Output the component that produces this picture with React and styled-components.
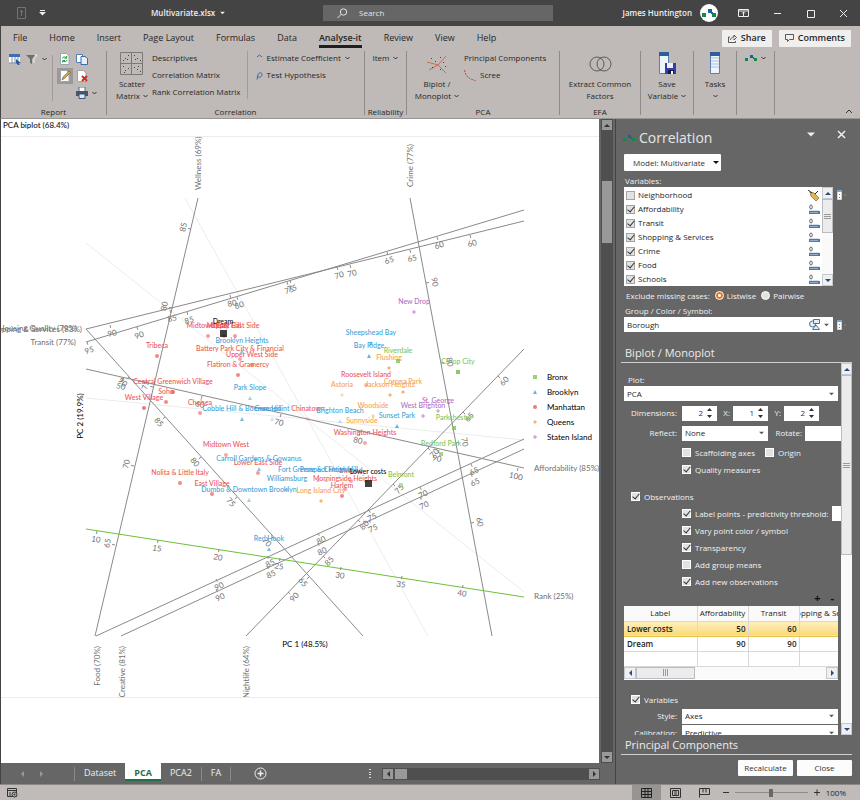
import React from 'react';
import styled, { createGlobalStyle, css } from 'styled-components';

const GlobalStyle = createGlobalStyle`
  * {
    box-sizing: border-box;
  }
  body {
    margin: 0;
    background: #666;
    color: #262626;
    font: 8px/12px 'Open Sans', 'Noto Sans', sans-serif;
  }
  button, input, select {
    margin: 0;
    padding: 0;
    border: 0;
    border-radius: 0;
    background: none;
    color: inherit;
    font: inherit;
  }
  h1, h2, h3, p {
    margin: 0;
    font-weight: 400;
  }
  svg {
    display: block;
    flex-shrink: 0;
  }
`;

const Shell = styled.div`
  display: flex;
  flex-direction: column;
  height: 100vh;
  overflow: hidden;
`;

/* ---------- title bar ---------- */

const TitleBar = styled.header`
  display: flex;
  align-items: center;
  flex-shrink: 0;
  height: 26px;
  padding: 0 12px 0 17px;
  background: #444;
  color: #f0f0f0;

  .quick {
    display: flex;
    align-items: center;
    gap: 13px;
    width: 134px;
  }
  .file {
    display: flex;
    align-items: center;
    gap: 5px;
    width: 172px;
    font-weight: 600;
  }
  .right {
    display: flex;
    align-items: center;
    margin-left: auto;
  }
  .user {
    margin-right: 8px;
    font-weight: 600;
  }
`;

const SearchBox = styled.label`
  display: flex;
  align-items: center;
  gap: 11px;
  flex: 0 1 230px;
  height: 16px;
  padding-left: 14px;
  background: #666;

  input {
    width: 100%;
    outline: none;
  }
  input::placeholder {
    color: #e4e4e4;
    opacity: 1;
  }
`;

const WindowButtons = styled.div`
  display: flex;
  align-items: center;
  gap: 24px;
  margin-left: 20px;

  button {
    display: flex;
  }
`;

/* ---------- ribbon ---------- */

const TabRow = styled.nav`
  display: flex;
  align-items: center;
  flex-shrink: 0;
  gap: 22px;
  height: 24px;
  padding: 0 9px 0 12px;
  border-left: 1px solid #444;
  background: #bfbab7;
  font-size: 9px;
`;

const RibbonTab = styled.a`
  padding: 4px 0 1px;
  border-bottom: 3px solid ${({ $active }) => ($active ? '#1f1f1f' : 'transparent')};
  color: #262626;
  font-weight: ${({ $active }) => ($active ? 600 : 400)};
  text-decoration: none;
  white-space: nowrap;
`;

const TabActions = styled.div`
  display: flex;
  gap: 7px;
  margin-left: auto;

  button {
    display: flex;
    align-items: center;
    gap: 4px;
    height: 17px;
    padding: 0 6px;
    border-radius: 1px;
    background: #f0efee;
    font-weight: 600;
  }
`;

const Ribbon = styled.div`
  display: flex;
  flex-shrink: 0;
  height: 69px;
  border-left: 1px solid #444;
  border-bottom: 1px solid #989694;
  background: #bfbab7;
`;

const Group = styled.section`
  display: flex;
  flex-direction: column;
  flex-shrink: 0;
  width: ${({ $width }) => $width}px;
  margin: 1px 0 3px;
  border-right: 1px solid #8f8b88;

  .body {
    display: flex;
    justify-content: ${({ $center }) => ($center ? 'center' : 'flex-start')};
    flex: 1;
    min-height: 0;
    padding-left: ${({ $pad }) => $pad || 0}px;
  }
  .caption {
    height: 10px;
    line-height: 14px;
    text-align: center;
    white-space: nowrap;
  }
`;

const Stack = styled.div`
  display: flex;
  flex-direction: column;
  gap: 5px;
  padding-top: 1px;
  ${({ $divided }) =>
    $divided &&
    css`
      margin: 0 8px 6px 0;
      padding-right: 6px;
      border-right: 1px solid #a19c99;
    `}
`;

const ToolButton = styled.button`
  display: flex;
  align-items: center;
  gap: 4px;
  height: 12px;
  text-align: left;
  white-space: nowrap;
`;

const BigButton = styled.button`
  display: flex;
  flex-direction: column;
  align-items: center;
  width: ${({ $width }) => $width}px;
  line-height: 12px;
  text-align: center;

  .icon {
    display: flex;
    align-items: center;
    height: 25px;
    margin-bottom: 2px;
  }
  .line {
    display: flex;
    align-items: center;
    justify-content: center;
    gap: 3px;
    min-height: 12px;
    white-space: nowrap;
  }
`;

const ReportTools = styled.div`
  display: grid;
  grid-template-columns: 17px 17px 8px 9px 16px 17px 8px;
  grid-template-rows: 16px 17px 17px;
  align-content: start;
  align-items: center;
  justify-items: center;

  button {
    display: flex;
    align-items: center;
    justify-content: center;
    width: 16px;
    height: 16px;
  }
  .divider {
    grid-row: 1 / 4;
    grid-column: 4;
    align-self: stretch;
    width: 1px;
    margin-top: 4px;
    background: #a19c99;
  }
  .pressed {
    background: #9c9895;
  }
  .edit {
    grid-column: 5;
  }
  .print {
    grid-column: 6;
  }
`;

const Collapse = styled.button`
  align-self: flex-end;
  margin: 0 7px 4px auto;
`;

/* ---------- workbook ---------- */

const Workspace = styled.main`
  display: flex;
  flex: 1;
  min-height: 0;
  border-left: 1px solid #444;
  background: #666;
`;

const Workbook = styled.div`
  display: flex;
  flex-direction: column;
  flex: 1;
  min-width: 0;
  border-right: 1px solid #444;
`;

const SheetArea = styled.div`
  display: flex;
  flex: 1;
  min-height: 0;
`;

const Sheet = styled.div`
  flex: 1;
  min-width: 0;
  overflow: hidden;
  background: #fff;

  h1 {
    height: 18px;
    padding-left: 2px;
    border-bottom: 1px solid #ececec;
    color: #111;
    font: 500 8px/12px Lato, sans-serif;
  }
`;

const Chart = styled.svg`
  width: 100%;
  height: 561px;
  border-bottom: 1px solid #ececec;
  font-family: Lato, sans-serif;
  font-size: 8px;

  .axis {
    fill: #6f6f6f;
    font-size: 8px;
  }
  .point {
    font-size: 7px;
    font-weight: 500;
    text-anchor: middle;
  }
  .middle {
    text-anchor: middle;
  }
  .end {
    text-anchor: end;
  }
`;

const VScroll = styled.div`
  display: flex;
  flex-direction: column;
  align-items: center;
  width: 12px;
  margin: 0 2px;
  background: #4f4f4f;

  button {
    display: flex;
    align-items: center;
    justify-content: center;
    width: 10px;
    height: 10px;
    margin: 1px 0;
    background: #999;
  }
  .thumb {
    width: 10px;
    height: 62px;
    margin: 50px 0 auto;
    background: #999;
  }
`;

const SheetTabs = styled.div`
  display: flex;
  align-items: center;
  flex-shrink: 0;
  height: 21px;
  padding: 0 15px 0 19px;
  color: #f0f0f0;

  .arrows {
    display: flex;
    gap: 14px;
    width: 54px;
  }
  .add {
    display: flex;
    margin-left: 23px;
  }
  .grip {
    margin: 0 11px 0 auto;
  }
`;

const SheetTab = styled.a`
  align-self: flex-start;
  height: ${({ $active }) => ($active ? 18 : 17)}px;
  padding: 4px 9px 0;
  border-bottom: 2px solid ${({ $active }) => ($active ? '#1e7145' : 'transparent')};
  background: ${({ $active }) => ($active ? '#fff' : 'none')};
  color: ${({ $active }) => ($active ? '#1e7145' : '#f0f0f0')};
  font-size: 9px;
  font-weight: ${({ $active }) => ($active ? 700 : 400)};
  line-height: 12px;
  text-decoration: none;
`;

const TabRule = styled.span`
  width: 1px;
  height: 14px;
  background: #8a8a8a;
`;

const HScroll = styled.div`
  display: flex;
  align-items: center;
  width: 218px;
  height: 12px;
  background: #4f4f4f;

  button {
    display: flex;
    align-items: center;
    justify-content: center;
    width: 10px;
    height: 10px;
    margin: 0 1px;
    background: #999;
  }
  .thumb {
    width: 12px;
    height: 10px;
    margin: 0 auto 0 1px;
    background: #999;
  }
`;

/* ---------- task panel ---------- */

const Panel = styled.aside`
  display: flex;
  flex-direction: column;
  flex: 0 0 244px;
  width: 244px;
  min-width: 0;
  padding: 0 8px 8px 5px;
  color: #f2f2f2;
`;

const PanelHead = styled.div`
  display: flex;
  align-items: center;
  gap: 4px;
  height: 35px;
  padding: 2px 6px 0 2px;

  h2 {
    color: #e6e6e6;
    font-size: 14px;
    line-height: 20px;
  }
  .menu {
    margin: -6px 18px 0 auto;
  }
  .close {
    margin-top: -6px;
  }
`;

const ModelButton = styled.button`
  display: flex;
  align-items: center;
  justify-content: space-between;
  width: 97px;
  height: 17px;
  margin: 0 0 4px 3px;
  padding: 0 2px 0 9px;
  border-radius: 1px;
  background: #fcfcfc;
  color: #333;
`;

const FieldLabel = styled.label`
  display: block;
  padding-left: 4px;
`;

const WithPicker = styled.div`
  display: flex;
  gap: 4px;
  padding-left: 3px;

  .picker {
    align-self: flex-start;
    margin-top: 3px;
  }
`;

const VariableList = styled.div`
  display: flex;
  width: 209px;
  height: 99px;
  background: #fff;
  color: #1c1c1c;

  ul {
    flex: 1;
    margin: 0;
    padding: 1px 2px;
    list-style: none;
  }
  li {
    display: flex;
    align-items: center;
    justify-content: space-between;
    height: 14px;
  }
`;

const Check = styled.label`
  display: flex;
  align-items: center;
  gap: ${({ $tight }) => ($tight ? 3 : 4)}px;
  white-space: nowrap;

  input {
    display: flex;
    align-items: center;
    justify-content: center;
    appearance: none;
    flex-shrink: 0;
    width: 9px;
    height: 9px;
    border: 1px solid ${({ $dark }) => ($dark ? '#a4a4a4' : '#fff')};
    background: #e2e2e2;
  }
  input[type='radio'] {
    border-radius: 50%;
  }
  input[type='radio']:checked {
    border-color: #fff;
    background: radial-gradient(circle, #fff 1px, #e0761c 2px);
  }
  input[type='checkbox']:checked::after {
    content: '';
    width: 3px;
    height: 6px;
    margin-bottom: 2px;
    border: solid #333;
    border-width: 0 1px 1px 0;
    transform: rotate(40deg);
  }
`;

const LightScroll = styled.div`
  display: flex;
  flex-direction: ${({ $horizontal }) => ($horizontal ? 'row' : 'column')};
  align-items: stretch;
  flex-shrink: 0;
  height: ${({ $horizontal }) => ($horizontal ? '12px' : 'auto')};
  background: #fafafa;

  button {
    display: flex;
    align-items: center;
    justify-content: center;
    flex: 0 0 12px;
    min-width: 11px;
    border: 1px solid #c5c9cf;
    background: #eef0f2;
  }
  .thumb {
    display: flex;
    align-items: center;
    justify-content: center;
    flex: 0 0 ${({ $thumb }) => $thumb}px;
    border: 1px solid #b9bdc2;
    background: #ececee;
  }
  .track {
    flex: 1;
  }
`;

const CasesRow = styled.div`
  display: flex;
  align-items: center;
  gap: 5px;
  height: 19px;
  padding-left: 5px;
`;

const SelectWrap = styled.span`
  display: flex;
  align-items: center;
  flex-shrink: 0;
  width: ${({ $width }) => $width}px;
  height: 15px;
  padding-right: 4px;
  background: #fff;
  color: #262626;

  select {
    flex: 1;
    height: 15px;
    padding-left: 3px;
    appearance: none;
    outline: none;
  }
`;

const SectionTitle = styled.h3`
  flex-shrink: 0;
  height: ${({ $height }) => $height}px;
  padding: ${({ $top }) => $top}px 0 0 4px;
  border-bottom: 1px solid #d0d0d0;
  color: #ececec;
  font-size: 11px;
  line-height: 15px;
`;

const Options = styled.div`
  display: flex;
  flex: 1;
  min-height: 0;
  overflow: hidden;

  .content {
    flex: 1;
    min-width: 0;
    overflow: hidden;
    padding: 11px 0 0 3px;
  }
`;

const FormRow = styled.div`
  display: flex;
  align-items: center;
  height: ${({ $height }) => $height}px;

  .name {
    flex-shrink: 0;
    width: 58px;
    padding-right: 5px;
    text-align: right;
  }
  .side {
    flex-shrink: 0;
    width: ${({ $side }) => $side || 16}px;
    padding-right: 3px;
    text-align: right;
  }
`;

const Spinner = styled.span`
  display: flex;
  align-items: center;
  flex-shrink: 0;
  width: ${({ $width }) => $width || 35}px;
  height: 15px;
  padding-right: 5px;
  background: #fff;
  color: #333;

  input {
    flex: 1;
    width: 0;
    padding-right: 4px;
    outline: none;
    text-align: right;
  }
`;

const CheckRow = styled.div`
  display: flex;
  align-items: center;
  gap: ${({ $gap }) => $gap || 10}px;
  height: 17px;
  padding-left: ${({ $indent }) => $indent}px;
`;

const TableTools = styled.div`
  display: flex;
  justify-content: flex-end;
  gap: 10px;
  height: 16px;
  padding-right: 7px;
  color: #0d0d0d;
  font-size: 11px;
  font-weight: 700;
`;

const DataFrame = styled.div`
  width: 214px;
  height: 74px;
  overflow: hidden;
  background: #fff;
  color: #1c1c1c;

  table {
    width: 226px;
    border-collapse: collapse;
    table-layout: fixed;
  }
  th, td {
    height: 15px;
    padding: 0 2px;
    border: solid #d8d8d8;
    border-width: 0 1px 1px 0;
    font-weight: 600;
    line-height: 12px;
    text-align: right;
  }
  th {
    padding: 0;
    background: #fafafa;
    font-weight: 400;
  }
  th span {
    display: flex;
    justify-content: center;
    overflow: hidden;
    white-space: nowrap;
  }
  td:first-child {
    padding-left: 3px;
    text-align: left;
  }
  .selected td {
    border-bottom-color: #e8c34a;
    background: linear-gradient(#fff0bb, #fbd978);
  }
`;

const PanelFooter = styled.div`
  display: flex;
  flex-shrink: 0;
  justify-content: flex-end;
  gap: 4px;
  padding-top: 5px;

  button {
    width: 55px;
    height: 16px;
    border-radius: 1px;
    background: #fcfcfc;
    color: #333;
  }
`;

/* ---------- status bar ---------- */

const StatusBar = styled.footer`
  display: flex;
  align-items: center;
  flex-shrink: 0;
  height: 16px;
  padding: 0 14px 0 7px;
  border-top: 1px solid #8c8885;
  background: #c0bbb8;

  .views {
    display: flex;
    margin: 0 4px 0 auto;
  }
  .zoom {
    display: flex;
    align-items: center;
    gap: 6px;
  }
`;

const ViewButton = styled.button`
  display: flex;
  align-items: center;
  justify-content: center;
  width: 29px;
  height: 15px;
  background: ${({ $active }) => ($active ? '#989492' : 'none')};
`;

const ZoomRange = styled.input`
  appearance: none;
  width: 73px;
  height: 9px;
  background: linear-gradient(#8e8a87, #8e8a87) center / 100% 1px no-repeat;

  &::-webkit-slider-thumb {
    appearance: none;
    width: 4px;
    height: 8px;
    background: #6a6765;
  }
`;

/* ---------- small drawings ---------- */

const Chevron = ({ color = '#333', up }) => (
  <svg width="5" height="4" viewBox="0 0 5 4">
    <path d={up ? 'M.5 3L2.5 1l2 2' : 'M.5 1l2 2 2-2'} fill="none" stroke={color} />
  </svg>
);

const TRIANGLES = {
  up: 'M0 4h6L3 1z',
  down: 'M0 1h6L3 4z',
  left: 'M4 0v6L1 3z',
  right: 'M1 0v6l3-3z',
};

const Triangle = ({ dir = 'down', color = '#333', size = 6 }) => {
  const tall = dir === 'left' || dir === 'right';
  return (
    <svg
      width={tall ? size - 1 : size}
      height={tall ? size : size - 1}
      viewBox={tall ? '0 0 5 6' : '0 0 6 5'}
    >
      <path d={TRIANGLES[dir]} fill={color} />
    </svg>
  );
};

const UpDown = () => (
  <svg width="5" height="10" viewBox="0 0 5 10">
    <path d="M0 3h5L2.500 0zM0 7h5L2.500 10z" fill="#333" />
  </svg>
);

const Logo = ({ size = 12 }) => (
  <svg width={size} height={size / 2} viewBox="0 0 12 6">
    <path d="M0 3h3v3H0zM9 3h3v3H9z" fill="#118a43" />
    <path d="M5 0h3v3H5zM8 2h1v2H8z" fill="#1464a5" />
  </svg>
);

const Avatar = () => (
  <svg width="18" height="18" viewBox="0 0 18 18">
    <circle cx="9" cy="9" r="9" fill="#fff" />
    <path d="M2 9h4v4H2zM12 9h4v4h-4z" fill="#118a43" />
    <path d="M8 5h4v4H8zM11 8h2v2h-2z" fill="#1464a5" />
  </svg>
);

const SearchIcon = () => (
  <svg width="11" height="11" viewBox="0 0 11 11">
    <g fill="none" stroke="#e4e4e4">
      <circle cx="6.500" cy="4" r="3.200" />
      <path d="M4.200 6.300L.5 10" />
    </g>
  </svg>
);

const PinIcon = () => (
  <svg width="9" height="12" viewBox="0 0 9 12">
    <path d="M.5.5h8v11h-8zM4.500 9V3.500M3 5l1.500-1.500L6 5" fill="none" stroke="#737373" />
  </svg>
);

const TableIcon = () => (
  <svg width="12" height="11" viewBox="0 0 12 11">
    <path d="M0 1h11v8H0z" fill="#fff" />
    <path d="M0 0h11v3H0z" fill="#3c6fae" />
    <path d="M3 3v6M6 3v6M9 3v6M0 9h7" fill="none" stroke="#7e8fa6" />
    <path d="M7 5l5 4-2 .3.500 1.700H9L7 9z" fill="#2b5ca3" />
  </svg>
);

const FunnelIcon = () => (
  <svg width="11" height="11" viewBox="0 0 11 11">
    <path d="M0 1h9L6 5v5L4 9V5z" fill="#6d6f73" />
    <path d="M9 1h2L8 5v4" fill="none" stroke="#eee" />
  </svg>
);

const PageIcon = ({ kind }) => (
  <svg width="12" height="12" viewBox="0 0 12 12">
    {kind === 'copy' && (
      <>
        <path d="M.5 1.500h6v8h-6z" fill="#fff" stroke="#4f7fbd" />
        <path d="M5 3.500h4l2.500 2v6H5z" fill="#e6effa" stroke="#3a6bac" />
      </>
    )}
    {kind !== 'copy' && <path d="M1.500.5h6l2.500 2.500v8.500H1.500z" fill="#fff" stroke="#9ba6b4" />}
    {kind === 'refresh' && (
      <path d="M3.500 5.500a2.200 2.200 0 0 1 4-.5M8 7a2.200 2.200 0 0 1-4 .7M7.700 3v2.200H5.500M3.700 9.500V7.500H6" fill="none" stroke="#1f9a3a" />
    )}
    {kind === 'edit' && <path d="M3 10l1-3 6-6 1.500 1.500-6 6z" fill="#d8a53f" stroke="#6e5a2c" strokeWidth=".6" />}
    {kind === 'delete' && <path d="M6 6l5 5M11 6l-5 5" stroke="#d5281e" strokeWidth="2" />}
  </svg>
);

const PrinterIcon = () => (
  <svg width="12" height="12" viewBox="0 0 12 12">
    <path d="M3 0h6v5H3z" fill="#fff" stroke="#4472ac" />
    <path d="M0 4h12v5H0z" fill="#4e5560" />
    <path d="M3 7h6v4.500H3z" fill="#dfe8f3" stroke="#35557f" />
  </svg>
);

const ScatterIcon = () => (
  <svg width="24" height="24" viewBox="0 0 24 24">
    <path d="M.5.5h22v22H.5zM11.500.5v22M.5 11.500h22" fill="none" stroke="#7d7977" />
    <path
      d="M3 8h1v1H3zM5 6h1v1H5zM8 3h1v1H8zM7 7h1v1H7zM14 3h1v1h-1zM17 6h1v1h-1zM20 8h1v1h-1zM15 7h1v1h-1zM3 14h1v1H3zM5 18h1v1H5zM8 16h1v1H8zM4 20h1v1H4zM14 15h1v1h-1zM17 17h1v1h-1zM20 19h1v1h-1zM18 14h1v1h-1z"
      fill="#444"
    />
  </svg>
);

const BiplotIcon = () => (
  <svg width="22" height="20" viewBox="0 0 22 20">
    <path d="M1 8l11 3 8-9M12 11l8 8M12 11L3 16" fill="none" stroke="#cf6a57" />
    <path d="M14 3h1v1h-1zM17 8h1v1h-1zM19 12h1v1h-1zM9 7h1v1H9zM6 13h1v1H6zM14 15h1v1h-1zM5 4h1v1H5z" fill="#444" />
  </svg>
);

const ScreeIcon = () => (
  <svg width="12" height="11" viewBox="0 0 12 11">
    <path d="M.5 0c1 6 4 9 11 10.500" fill="none" stroke="#b4503f" strokeDasharray="2 1" />
  </svg>
);

const CirclesIcon = () => (
  <svg width="23" height="16" viewBox="0 0 23 16">
    <g fill="none" stroke="#444" strokeWidth=".8">
      <circle cx="8" cy="8" r="7" />
      <circle cx="15" cy="8" r="7" />
    </g>
  </svg>
);

const ColumnIcon = ({ save }) => (
  <svg width="18" height="23" viewBox="0 0 18 23">
    <g transform={save ? 'translate(-2 0)' : 'translate(1 0)'}>
      <path d="M3.500.5h9v21h-9z" fill="#eef4fb" stroke="#5d7fae" />
      <path d="M3 0h10v4H3z" fill="#2f5c9c" />
      {!save && <path d="M4 6h8M4 9h8M4 12h8M4 15h8" stroke="#a9bfdb" />}
    </g>
    {save && (
      <>
        <path d="M7 11h11v11H7z" fill="#3540a4" />
        <path d="M9 11h6v5H9z" fill="#eef" />
        <path d="M10 18h6v4h-6z" fill="#111a52" />
        <path d="M13 19h2v3h-2z" fill="#fff" />
      </>
    )}
  </svg>
);

const PickerIcon = () => (
  <svg width="9" height="10" viewBox="0 0 9 10">
    <path d="M.5.5h4v9h-4z" fill="#fff" stroke="#c7d6e8" />
    <path d="M0 0h5v2H0z" fill="#7ea3d0" />
    <path d="M2 4h1v1H2zM2 7h1v1H2z" fill="#5882b5" />
    <path d="M7 5h2" stroke="#8a8a8a" />
  </svg>
);

const TagIcon = () => (
  <svg width="12" height="11" viewBox="0 0 12 11">
    <path d="M2 2l4 1 5 5-3 3-5-5z" fill="#e3b64d" stroke="#7b6531" strokeWidth=".7" />
    <path d="M0 0l4 3M7 4l3-3" stroke="#222" fill="none" />
  </svg>
);

const ScaleIcon = () => (
  <svg width="12" height="11" viewBox="0 0 12 11">
    <ellipse cx="3" cy="3" rx="1.300" ry="2" fill="none" stroke="#444" strokeWidth=".8" />
    <path d="M1 7h11v3H1z" fill="#54789f" />
    <path d="M1 6.500h10M3 8v1M5 8v1M7 8v1M9 8v1" stroke="#d3e0ee" fill="none" />
  </svg>
);

const SymbolsIcon = () => (
  <svg width="11" height="11" viewBox="0 0 11 11">
    <g fill="#e4eef8" stroke="#4a7096">
      <circle cx="3.500" cy="5" r="3" />
      <path d="M4.500.5h6v4h-6z" />
      <path d="M7 6l3.500 4.500h-7z" />
    </g>
  </svg>
);

/* ---------- chart data ---------- */

const COLORS = {
  Bronx: '#7cc653',
  Brooklyn: '#3f9fd6',
  Manhattan: '#ec5656',
  Queens: '#f7a14c',
  'Staten Island': '#b36cc4',
  New: '#111',
};

// line: x1, y1, x2, y2; first tick at `at`, every next one moved by `step`
const AXES = [
  { line: [198, 198, 95, 636], at: [191, 229], step: [-19, 79], values: [85, 80, 75, 70, 65], label: [-8, -2], angle: -77 },
  { line: [410, 198, 492, 636], at: [426, 283], step: [15, 80], values: [90, 80, 70, 60], label: [9, -1], angle: 79 },
  { line: [86, 329, 524, 221], at: [470, 235], step: [-60, 15], values: [60, 65, 70, 75, 80, 85, 90], label: [2, 8], angle: -14 },
  { line: [86, 342, 524, 210], at: [437, 237], step: [-50, 15], values: [60, 65, 70, 75, 80, 85, 90, 95], label: [2, 8], angle: -17 },
  { line: [86, 369, 524, 468], at: [123, 378], step: [79, 18], values: [50, 60, 70, 80, 90, 100], label: [-2, 8], angle: 13 },
  { line: [86, 329, 363, 636], at: [129, 377], step: [36, 40], values: [90, 85, 80, 75, 70, 65], label: [-6, 5], angle: 48 },
  { line: [246, 636, 524, 349], at: [498, 376], step: [-35, 36], values: [60, 65, 70, 75, 80, 85, 90], label: [6, 5], angle: -46 },
  { line: [96, 636, 524, 439], at: [471, 464], step: [-51, 23], values: [65, 70, 75, 80, 85, 90], label: [3, 7], angle: -25 },
  { line: [121, 636, 524, 449], at: [471, 474], step: [-51, 23], values: [65, 70, 75, 80, 85, 90], label: [4, 8], angle: -25 },
  { line: [86, 529, 524, 597], at: [97, 531], step: [61, 9], values: [10, 15, 20, 25, 30, 35, 40], label: [-1, 8], angle: 9, color: '#6cc136' },
];

const FAINT_LINES = ['M86 243L524 592', 'M185 198L428 636', 'M86 398L524 440'];

const CAPTIONS = [
  { text: 'Wellness (69%)', x: 201, y: 190, angle: -90 },
  { text: 'Crime (77%)', x: 413, y: 187, angle: -90 },
  { text: 'Food (70%)', x: 100, y: 646, angle: -90, end: true },
  { text: 'Creative (81%)', x: 125, y: 646, angle: -90, end: true },
  { text: 'Nightlife (64%)', x: 249, y: 646, angle: -90, end: true },
  { text: 'Housing Quality (79%)', x: 77, y: 331, end: true },
  { text: 'Shopping & Services (83%)', x: 82, y: 332, end: true },
  { text: 'Transit (77%)', x: 76, y: 345, end: true },
  { text: 'Affordability (85%)', x: 534, y: 471 },
  { text: 'Rank (25%)', x: 534, y: 599 },
];

// name, borough, x and y of the marker, opacity of the marker
const POINTS = [
  ['Midtown East', 'Manhattan', 208, 336, 0.6],
  ['Murray Hill', 'Manhattan', 224, 336, 0.6],
  ['Upper East Side', 'Manhattan', 235, 336, 0.6],
  ['Brooklyn Heights', 'Brooklyn', 242, 351, 0.6],
  ['Battery Park City & Financial', 'Manhattan', 240, 359, 0.5],
  ['Upper West Side', 'Manhattan', 252, 365, 0.6],
  ['Flatiron & Gramercy', 'Manhattan', 238, 375, 0.7],
  ['Tribeca', 'Manhattan', 157, 356, 0.7],
  ['Central Greenwich Village', 'Manhattan', 173, 392, 0.8],
  ['Soho', 'Manhattan', 166, 402, 0.7],
  ['West Village', 'Manhattan', 144, 408, 0.8],
  ['Chelsea', 'Manhattan', 200, 413, 0.6],
  ['Park Slope', 'Brooklyn', 250, 398, 0.5],
  ['Cobble Hill & Boerum Hill', 'Brooklyn', 242, 419, 0.7],
  ['Greenpoint', 'Brooklyn', 272, 419, 0.3],
  ['Chinatown', 'Manhattan', 308, 419, 0.2],
  ['Brighton Beach', 'Brooklyn', 340, 421, 0.3],
  ['Sunnyside', 'Queens', 362, 431, 0.5],
  ['Woodside', 'Queens', 373, 416, 0.5],
  ['Astoria', 'Queens', 342, 395, 0.4],
  ['Jackson Heights', 'Queens', 390, 395, 0.8],
  ['Corona Park', 'Queens', 403, 392, 0.8],
  ['Roosevelt Island', 'Manhattan', 366, 385, 0.4],
  ['Flushing', 'Queens', 389, 368, 0.8],
  ['Riverdale', 'Bronx', 398, 361, 0.8],
  ['Bay Ridge', 'Brooklyn', 369, 356, 0.8],
  ['Sheepshead Bay', 'Brooklyn', 371, 343, 0.7],
  ['New Drop', 'Staten Island', 414, 312, 0.8],
  ['Co-op City', 'Bronx', 458, 372, 0.9],
  ['St. George', 'Staten Island', 438, 411, 0.7],
  ['West Brighton', 'Staten Island', 423, 416, 0.8],
  ['Sunset Park', 'Brooklyn', 397, 426, 0.8],
  ['Parkchester', 'Bronx', 454, 428, 0.8],
  ['Bedford Park', 'Bronx', 441, 454, 0.7],
  ['Washington Heights', 'Manhattan', 365, 443, 0.5],
  ['Belmont', 'Bronx', 401, 485, 0.5],
  ['Inwood', 'Manhattan', 351, 481, 0.5],
  ['Prospect Heights', 'Brooklyn', 326, 480, 0.4],
  ['Fort Greene & Clinton Hill', 'Brooklyn', 318, 480, 0.4],
  ['Williamsburg', 'Brooklyn', 287, 489, 0.5],
  ['Morningside Heights', 'Manhattan', 345, 489, 0.5],
  ['Harlem', 'Manhattan', 342, 496, 0.7],
  ['Long Island City', 'Queens', 321, 501, 0.8],
  ['Midtown West', 'Manhattan', 226, 455, 0.5],
  ['Carroll Gardens & Gowanus', 'Brooklyn', 259, 469, 0.6],
  ['Lower East Side', 'Manhattan', 258, 473, 0.6],
  ['Nolita & Little Italy', 'Manhattan', 180, 483, 0.7],
  ['East Village', 'Manhattan', 212, 494, 0.7],
  ['Dumbo & Downtown Brooklyn', 'Brooklyn', 249, 500, 0.5],
  ['Red Hook', 'Brooklyn', 269, 549, 0.7],
  ['Dream', 'New', 223, 333, 0.8],
  ['Lower costs', 'New', 368, 483, 0.8],
];

const LEGEND = ['Bronx', 'Brooklyn', 'Manhattan', 'Queens', 'Staten Island'];

const Marker = ({ group, x, y, opacity = 0.8 }) => {
  const fill = COLORS[group];
  const shapes = {
    Bronx: <path d="M-2-2h4v4h-4z" fill={fill} />,
    Brooklyn: <path d="M-2 2h4L0-2z" fill={fill} />,
    Manhattan: <circle r="2" fill={fill} />,
    Queens: <path d="M-2 0L0-2 2 0 0 2z" fill={fill} />,
    'Staten Island': <path d="M-2 0h4M0-2v4" stroke={fill} />,
    New: <path d="M-3-3h7v7h-7z" fill={fill} />,
  };
  return (
    <g transform={`translate(${x} ${y})`} opacity={opacity}>
      {shapes[group]}
    </g>
  );
};

const Axis = ({ line, at, step, values, label, angle, color = '#8a8a8a' }) => {
  const [x1, y1, x2, y2] = line;
  const length = Math.hypot(x2 - x1, y2 - y1);
  let nx = (y2 - y1) / length;
  let ny = -(x2 - x1) / length;
  // ticks stand on the same side of the line as their labels
  if (nx * label[0] + ny * label[1] < 0) {
    nx = -nx;
    ny = -ny;
  }
  return (
    <g>
      <line x1={x1} y1={y1} x2={x2} y2={y2} stroke={color} />
      {values.map((value, i) => {
        const x = at[0] + step[0] * i;
        const y = at[1] + step[1] * i;
        return (
          <g key={value}>
            <line x1={x} y1={y} x2={x + nx * 3} y2={y + ny * 3} stroke="#8a8a8a" />
            <text
              className="axis middle"
              dy="3"
              transform={`translate(${x + label[0]} ${y + label[1]}) rotate(${angle})`}
            >
              {value}
            </text>
          </g>
        );
      })}
    </g>
  );
};

const Biplot = () => (
  <Chart viewBox="1 137 598 560" preserveAspectRatio="xMinYMin meet" role="img" aria-label="PCA biplot">
    {FAINT_LINES.map((d) => (
      <path key={d} d={d} stroke="#ececec" />
    ))}
    {AXES.map((axis, i) => (
      <Axis key={i} {...axis} />
    ))}
    {CAPTIONS.map(({ text, x, y, angle = 0, end }) => (
      <text
        key={text}
        className={end ? 'axis end' : 'axis'}
        transform={`translate(${x} ${y}) rotate(${angle})`}
      >
        {text}
      </text>
    ))}
    <text className="middle" transform="translate(83 416) rotate(-90)">PC 2 (19.9%)</text>
    <text className="middle" x="305" y="647">PC 1 (48.5%)</text>
    {POINTS.map(([name, group, x, y, opacity]) => (
      <g key={name}>
        <Marker group={group} x={x} y={y} opacity={opacity} />
        <text className="point" x={x} y={group === 'New' ? y - 9 : y - 8} fill={COLORS[group]}>{name}</text>
      </g>
    ))}
    {LEGEND.map((group, i) => (
      <g key={group}>
        <Marker group={group} x={535} y={377 + i * 15} />
        <text x="547" y={380 + i * 15}>{group}</text>
      </g>
    ))}
  </Chart>
);

/* ---------- page parts ---------- */

const RIBBON_TABS = ['File', 'Home', 'Insert', 'Page Layout', 'Formulas', 'Data', 'Analyse-it', 'Review', 'View', 'Help'];
const VARIABLES = ['Neighborhood', 'Affordability', 'Transit', 'Shopping & Services', 'Crime', 'Food', 'Schools'];

const Header = () => (
  <TitleBar>
    <div className="quick">
      <PinIcon />
      <svg width="7" height="6" viewBox="0 0 7 6">
        <path d="M1 .5h5" stroke="#eee" />
        <path d="M0 2h7L3.500 5.500z" fill="#eee" />
      </svg>
    </div>
    <div className="file">
      Multivariate.xlsx <Triangle color="#eee" size={5} />
    </div>
    <SearchBox>
      <SearchIcon />
      <input type="search" placeholder="Search" aria-label="Search" />
    </SearchBox>
    <div className="right">
      <span className="user">James Huntington</span>
      <Avatar />
      <WindowButtons>
        <button aria-label="Ribbon display options">
          <svg width="11" height="8" viewBox="0 0 11 8">
            <path d="M.5.5h10v7H.5zM.5 2h10M5.500 7V3M4 4.500L5.500 3 7 4.500" fill="none" stroke="#eee" />
          </svg>
        </button>
        <button aria-label="Minimize">
          <svg width="9" height="8" viewBox="0 0 9 8"><path d="M1 4.500h7" stroke="#eee" /></svg>
        </button>
        <button aria-label="Maximize">
          <svg width="9" height="9" viewBox="0 0 9 9"><path d="M1.500 1.500h7v7h-7z" fill="none" stroke="#eee" /></svg>
        </button>
        <button aria-label="Close">
          <svg width="9" height="9" viewBox="0 0 9 9"><path d="M1 1l7 7M8 1L1 8" stroke="#eee" /></svg>
        </button>
      </WindowButtons>
    </div>
  </TitleBar>
);

const RibbonBar = () => (
  <>
    <TabRow>
      {RIBBON_TABS.map((tab) => (
        <RibbonTab key={tab} href="#" $active={tab === 'Analyse-it'}>{tab}</RibbonTab>
      ))}
      <TabActions>
        <button>
          <svg width="9" height="9" viewBox="0 0 9 9">
            <path d="M2 3H.5v5.500h7V7M2.500 6c.3-2 1.500-3 3.500-3V1l2.500 2.500L6 6V4.500" fill="none" stroke="#333" strokeWidth=".8" />
          </svg>
          Share
        </button>
        <button>
          <svg width="9" height="9" viewBox="0 0 9 9">
            <path d="M.5.5h8v5h-4l-2 2v-2h-2z" fill="none" stroke="#333" strokeWidth=".8" />
          </svg>
          Comments
        </button>
      </TabActions>
    </TabRow>
    <Ribbon>
      <Group $width={106} $pad={5}>
        <div className="body">
          <ReportTools>
            <span className="divider" />
            <button aria-label="Dataset"><TableIcon /></button>
            <button aria-label="Filter"><FunnelIcon /></button>
            <Chevron />
            <button aria-label="Refresh"><PageIcon kind="refresh" /></button>
            <button aria-label="Duplicate"><PageIcon kind="copy" /></button>
            <button className="pressed edit" aria-label="Edit"><PageIcon kind="edit" /></button>
            <button aria-label="Delete"><PageIcon kind="delete" /></button>
            <button className="print" aria-label="Print"><PrinterIcon /></button>
            <Chevron />
          </ReportTools>
        </div>
        <div className="caption">Report</div>
      </Group>
      <Group $width={258} $pad={5}>
        <div className="body">
          <BigButton $width={40}>
            <span className="icon"><ScatterIcon /></span>
            <span className="line">Scatter</span>
            <span className="line">Matrix <Chevron /></span>
          </BigButton>
          <Stack $divided>
            <ToolButton>Descriptives</ToolButton>
            <ToolButton>Correlation Matrix</ToolButton>
            <ToolButton>Rank Correlation Matrix</ToolButton>
          </Stack>
          <Stack>
            <ToolButton>
              <svg width="7" height="9" viewBox="0 0 7 9"><path d="M1 3l2.500-2L6 3" fill="none" stroke="#3b62a8" /></svg>
              Estimate Coefficient <Chevron />
            </ToolButton>
            <ToolButton>
              <svg width="7" height="9" viewBox="0 0 7 9">
                <path d="M1 8.500l1-5C2.500 1.500 6 1 6 3.500S3 7 2 5.500" fill="none" stroke="#3b62a8" />
              </svg>
              Test Hypothesis
            </ToolButton>
          </Stack>
        </div>
        <div className="caption">Correlation</div>
      </Group>
      <Group $width={42} $center>
        <div className="body">
          <Stack>
            <ToolButton>Item <Chevron /></ToolButton>
          </Stack>
        </div>
        <div className="caption">Reliability</div>
      </Group>
      <Group $width={153} $pad={3}>
        <div className="body">
          <BigButton $width={54}>
            <span className="icon"><BiplotIcon /></span>
            <span className="line">Biplot /</span>
            <span className="line">Monoplot <Chevron /></span>
          </BigButton>
          <Stack>
            <ToolButton>Principal Components</ToolButton>
            <ToolButton><ScreeIcon /> Scree</ToolButton>
          </Stack>
        </div>
        <div className="caption">PCA</div>
      </Group>
      <Group $width={81} $center>
        <div className="body">
          <BigButton $width={76}>
            <span className="icon"><CirclesIcon /></span>
            <span className="line">Extract Common</span>
            <span className="line">Factors</span>
          </BigButton>
        </div>
        <div className="caption">EFA</div>
      </Group>
      <Group $width={53} $center>
        <div className="body">
          <BigButton $width={48}>
            <span className="icon"><ColumnIcon save /></span>
            <span className="line">Save</span>
            <span className="line">Variable <Chevron /></span>
          </BigButton>
        </div>
      </Group>
      <Group $width={43} $center>
        <div className="body">
          <BigButton $width={38}>
            <span className="icon"><ColumnIcon /></span>
            <span className="line">Tasks</span>
            <span className="line"><Chevron /></span>
          </BigButton>
        </div>
      </Group>
      <Group $width={38} $center>
        <div className="body">
          <Stack>
            <ToolButton aria-label="Analyse-it"><Logo /> <Chevron /></ToolButton>
          </Stack>
        </div>
      </Group>
      <Collapse aria-label="Collapse the ribbon">
        <svg width="8" height="5" viewBox="0 0 8 5"><path d="M1 4l3-3 3 3" fill="none" stroke="#333" /></svg>
      </Collapse>
    </Ribbon>
  </>
);

const Book = () => (
  <Workbook>
    <SheetArea>
      <Sheet>
        <h1>PCA biplot (68.4%)</h1>
        <Biplot />
      </Sheet>
      <VScroll>
        <button aria-label="Scroll up"><Triangle dir="up" /></button>
        <div className="thumb" />
        <button aria-label="Scroll down"><Triangle /></button>
      </VScroll>
    </SheetArea>
    <SheetTabs>
      <div className="arrows">
        <Triangle dir="left" color="#999" />
        <Triangle dir="right" color="#999" />
      </div>
      <TabRule />
      <SheetTab href="#">Dataset</SheetTab>
      <SheetTab href="#" $active>PCA</SheetTab>
      <SheetTab href="#">PCA2</SheetTab>
      <TabRule />
      <SheetTab href="#">FA</SheetTab>
      <TabRule />
      <button className="add" aria-label="New sheet">
        <svg width="13" height="13" viewBox="0 0 13 13">
          <circle cx="6.500" cy="6.500" r="5.500" fill="none" stroke="#eee" />
          <path d="M6.500 3.500v6M3.500 6.500h6" stroke="#eee" strokeWidth="1.500" />
        </svg>
      </button>
      <svg className="grip" width="2" height="9" viewBox="0 0 2 9">
        <path d="M0 0h2v1H0zM0 3h2v1H0zM0 5h2v1H0zM0 8h2v1H0z" fill="#ddd" />
      </svg>
      <HScroll>
        <button aria-label="Scroll left"><Triangle dir="left" /></button>
        <div className="thumb" />
        <button aria-label="Scroll right"><Triangle dir="right" /></button>
      </HScroll>
    </SheetTabs>
  </Workbook>
);

const Grip = ({ turned }) => (
  <svg width="7" height="7" viewBox="0 0 7 7">
    <path
      d={turned ? 'M1.500 0v7M3.500 0v7M5.500 0v7' : 'M0 1.500h7M0 3.500h7M0 5.500h7'}
      stroke="#9a9a9a"
    />
  </svg>
);

const Scrollbar = ({ horizontal, thumb }) => (
  <LightScroll $horizontal={horizontal} $thumb={thumb}>
    <button aria-label="Back"><Triangle dir={horizontal ? 'left' : 'up'} color="#2c4a7c" /></button>
    <div className="thumb"><Grip turned={horizontal} /></div>
    <div className="track" />
    <button aria-label="Forward"><Triangle dir={horizontal ? 'right' : 'down'} color="#2c4a7c" /></button>
  </LightScroll>
);

const CheckBox = ({ text, checked, dark }) => (
  <Check $dark={dark} $tight={dark}>
    <input type="checkbox" defaultChecked={checked} />
    {text}
  </Check>
);

const Select = ({ id, value, width, children }) => (
  <SelectWrap $width={width}>
    <select id={id} defaultValue={value}>
      <option>{value}</option>
    </select>
    {children}
    <Triangle size={5} color="#555" />
  </SelectWrap>
);

const NumberBox = ({ id, value }) => (
  <Spinner>
    <input id={id} type="text" inputMode="numeric" defaultValue={value} />
    <UpDown />
  </Spinner>
);

const ObservationTable = () => (
  <DataFrame>
    <table>
      <colgroup>
        <col width="73" />
        <col width="51" />
        <col width="51" />
        <col width="51" />
      </colgroup>
      <thead>
        <tr>
          <th><span>Label</span></th>
          <th><span>Affordability</span></th>
          <th><span>Transit</span></th>
          <th><span>Shopping &amp; Services</span></th>
        </tr>
      </thead>
      <tbody>
        <tr className="selected"><td>Lower costs</td><td>50</td><td>60</td><td /></tr>
        <tr><td>Dream</td><td>90</td><td>90</td><td /></tr>
        <tr><td /><td /><td /><td /></tr>
      </tbody>
    </table>
    <Scrollbar horizontal thumb={59} />
  </DataFrame>
);

const TaskPanel = () => (
  <Panel>
    <PanelHead>
      <Logo size={12} />
      <h2>Correlation</h2>
      <button className="menu" aria-label="Panel menu"><Triangle size={8} color="#eee" /></button>
      <button className="close" aria-label="Close panel">
        <svg width="9" height="9" viewBox="0 0 9 9"><path d="M1 1l7 7M8 1L1 8" stroke="#eee" strokeWidth="1.500" /></svg>
      </button>
    </PanelHead>
    <ModelButton>Model: Multivariate <Triangle color="#111" /></ModelButton>
    <FieldLabel as="div">Variables:</FieldLabel>
    <WithPicker>
      <VariableList>
        <ul>
          {VARIABLES.map((name, i) => (
            <li key={name}>
              <CheckBox dark text={name} checked={i > 0} />
              {i === 0 ? <TagIcon /> : <ScaleIcon />}
            </li>
          ))}
        </ul>
        <Scrollbar thumb={34} />
      </VariableList>
      <button className="picker" aria-label="Pick variables"><PickerIcon /></button>
    </WithPicker>
    <CasesRow>
      Exclude missing cases:
      <Check $tight><input type="radio" name="cases" defaultChecked />Listwise</Check>
      <Check $tight><input type="radio" name="cases" />Pairwise</Check>
    </CasesRow>
    <FieldLabel htmlFor="group">Group / Color / Symbol:</FieldLabel>
    <WithPicker>
      <Select id="group" value="Borough" width={209}><SymbolsIcon />&nbsp;&nbsp;</Select>
      <button className="picker" aria-label="Pick group"><PickerIcon /></button>
    </WithPicker>
    <SectionTitle $height={31} $top={13}>Biplot / Monoplot</SectionTitle>
    <Options>
      <div className="content">
        <FieldLabel htmlFor="plot">Plot:</FieldLabel>
        <Select id="plot" value="PCA" width={214} />
        <FormRow $height={24}>
          <label className="name" htmlFor="dimensions">Dimensions:</label>
          <NumberBox id="dimensions" value="2" />
          <label className="side" htmlFor="dim-x">X:</label>
          <NumberBox id="dim-x" value="1" />
          <label className="side" htmlFor="dim-y">Y:</label>
          <NumberBox id="dim-y" value="2" />
        </FormRow>
        <FormRow $height={16} $side={37}>
          <label className="name" htmlFor="reflect">Reflect:</label>
          <Select id="reflect" value="None" width={86} />
          <label className="side" htmlFor="rotate">Rotate:</label>
          <Spinner $width={50}><input id="rotate" type="text" /></Spinner>
        </FormRow>
        <FormRow $height={3} />
        <CheckRow $indent={58}>
          <CheckBox text="Scaffolding axes" />
          <CheckBox text="Origin" />
        </CheckRow>
        <CheckRow $indent={58}><CheckBox text="Quality measures" checked /></CheckRow>
        <FormRow $height={10} />
        <CheckRow $indent={7}><CheckBox text="Observations" checked /></CheckRow>
        <CheckRow $indent={58} $gap={4}>
          <CheckBox text="Label points  - predictivity threshold:" checked />
          <Spinner><input type="text" aria-label="Predictivity threshold" /></Spinner>
        </CheckRow>
        <CheckRow $indent={58}><CheckBox text="Vary point color / symbol" checked /></CheckRow>
        <CheckRow $indent={58}><CheckBox text="Transparency" checked /></CheckRow>
        <CheckRow $indent={58}><CheckBox text="Add group means" /></CheckRow>
        <CheckRow $indent={58}><CheckBox text="Add new observations" checked /></CheckRow>
        <TableTools>
          <button aria-label="Add row">+</button>
          <button aria-label="Remove row">-</button>
        </TableTools>
        <ObservationTable />
        <FormRow $height={11} />
        <CheckRow $indent={7}><CheckBox text="Variables" checked /></CheckRow>
        <FormRow $height={16}>
          <label className="name" htmlFor="style">Style:</label>
          <Select id="style" value="Axes" width={156} />
        </FormRow>
        <FormRow $height={17}>
          <label className="name" htmlFor="calibration">Calibration:</label>
          <Select id="calibration" value="Predictive" width={156} />
        </FormRow>
      </div>
      <Scrollbar thumb={180} />
    </Options>
    <SectionTitle $height={20} $top={2}>Principal Components</SectionTitle>
    <PanelFooter>
      <button>Recalculate</button>
      <button>Close</button>
    </PanelFooter>
  </Panel>
);

const Status = () => (
  <StatusBar>
    <svg width="11" height="10" viewBox="0 0 11 10">
      <path d="M.5.5h9v8h-9zM.5 2.500h9M2 5h2M2 7h2" fill="none" stroke="#333" />
      <circle cx="7.500" cy="6.500" r="2.500" fill="#c0bbb8" stroke="#333" />
      <circle cx="7.500" cy="6.500" r="1" fill="#333" />
    </svg>
    <div className="views">
      <ViewButton $active aria-label="Normal view">
        <svg width="11" height="10" viewBox="0 0 11 10">
          <path d="M.5.5h10v9H.5zM.5 3.500h10M.5 6.500h10M4 .5v9M7 .5v9" fill="none" stroke="#222" />
        </svg>
      </ViewButton>
      <ViewButton aria-label="Page layout view">
        <svg width="11" height="10" viewBox="0 0 11 10">
          <path d="M.5.5h10v9H.5zM2.500 2.500h6v5h-6zM4 4h3M4 6h3" fill="none" stroke="#333" />
        </svg>
      </ViewButton>
      <ViewButton aria-label="Page break view">
        <svg width="11" height="10" viewBox="0 0 11 10">
          <path d="M.5 9.500v-9h10v6h-10M4 .5v4M7 .5v4" fill="none" stroke="#333" />
        </svg>
      </ViewButton>
    </div>
    <div className="zoom">
      <svg width="6" height="7" viewBox="0 0 6 7"><path d="M0 3.500h6" stroke="#333" /></svg>
      <ZoomRange type="range" min="10" max="190" defaultValue="100" aria-label="Zoom" />
      <svg width="6" height="7" viewBox="0 0 6 7"><path d="M0 3.500h6M3 .5v6" stroke="#333" /></svg>
      <span className="value">100%</span>
    </div>
  </StatusBar>
);

const App = () => (
  <Shell>
    <GlobalStyle />
    <Header />
    <RibbonBar />
    <Workspace>
      <Book />
      <TaskPanel />
    </Workspace>
    <Status />
  </Shell>
);

export default App;
